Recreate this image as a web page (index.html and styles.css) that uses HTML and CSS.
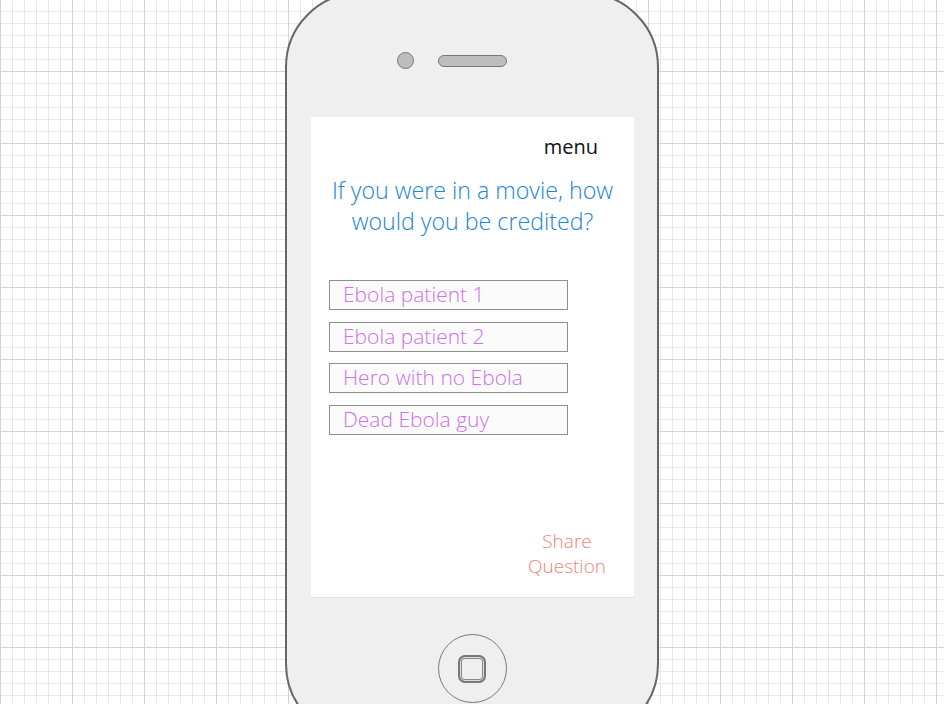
FILE: index.html
```html
<!DOCTYPE html>
<html>
<head>
<meta charset="utf-8">
<link rel="stylesheet" href="styles.css">
</head>
<body>
<div class="stage">
  <div class="phone">
    <div class="top-bar">
      <span class="camera"></span>
      <span class="speaker"></span>
    </div>
    <div class="screen">
      <div class="menu">menu</div>
      <h1 class="question">If you were in a movie, how<br>would you be credited?</h1>
      <ul class="options">
        <li class="option">Ebola patient 1</li>
        <li class="option">Ebola patient 2</li>
        <li class="option">Hero with no Ebola</li>
        <li class="option">Dead Ebola guy</li>
      </ul>
      <div class="share">Share<br>Question</div>
    </div>
    <div class="home"><span class="home-square"></span></div>
  </div>
</div>
</body>
</html>
```
FILE: styles.css
```css
html, body {
  margin: 0;
  padding: 0;
}
body {
  width: 944px;
  height: 704px;
  overflow: hidden;
  background-color: #ffffff;
  background-image:
    linear-gradient(to right, #d4d4d4 1px, transparent 1px),
    linear-gradient(to bottom, #d4d4d4 1px, transparent 1px),
    linear-gradient(to right, #e8e8e8 1px, transparent 1px),
    linear-gradient(to bottom, #e8e8e8 1px, transparent 1px);
  background-size: 72px 72px, 72px 72px, 12px 12px, 12px 12px;
  background-position: 0 -1px, 0 -1px, 0 -1px, 0 -1px;
  font-family: "Open Sans", "Noto Sans", sans-serif;
  font-weight: 350;
}
.stage {
  display: flex;
  justify-content: center;
}
.phone {
  box-sizing: border-box;
  width: 374px;
  height: 747px;
  margin-top: -8px;
  border: 2px solid #666666;
  border-radius: 75px;
  background: #efefef;
  display: flex;
  flex-direction: column;
}
.top-bar {
  display: flex;
  align-items: center;
  gap: 24px;
  margin-top: 58px;
  padding-left: 110px;
  height: 17px;
}
.camera {
  box-sizing: border-box;
  width: 17px;
  height: 17px;
  border-radius: 50%;
  background: #bdbdbd;
  border: 1px solid #777777;
}
.speaker {
  box-sizing: border-box;
  width: 69px;
  height: 12px;
  border-radius: 6px;
  background: #bdbdbd;
  border: 1px solid #777777;
}
.screen {
  box-sizing: border-box;
  margin-top: 48px;
  margin-left: 24px;
  width: 323px;
  height: 481px;
  background: #ffffff;
  border-bottom: 1px solid #e2e2e2;
  display: flex;
  flex-direction: column;
}
.menu {
  align-self: flex-end;
  margin-top: 17px;
  margin-right: 36px;
  font-size: 20px;
  font-weight: 400;
  line-height: 26px;
  color: #111111;
}
.question {
  margin: 15px 0 0;
  font-weight: 350;
  font-size: 23.2px;
  line-height: 31px;
  text-align: center;
  color: #1a85d6;
}
.options {
  list-style: none;
  margin: 43px 0 0 18px;
  padding: 0;
  display: flex;
  flex-direction: column;
  gap: 12px;
}
.option {
  box-sizing: border-box;
  width: 239px;
  height: 30px;
  border: 1px solid #8f8f8f;
  background: #fbfbfb;
  padding-left: 13px;
  font-size: 21px;
  line-height: 27px;
  color: #d070ea;
}
.option:nth-child(3) {
  margin-top: -1px;
}
.share {
  margin-top: auto;
  margin-bottom: 18px;
  align-self: flex-end;
  margin-right: 28px;
  text-align: center;
  font-size: 19px;
  line-height: 25px;
  color: #ee8570;
}
.home {
  box-sizing: border-box;
  align-self: center;
  margin-top: 36px;
  width: 69px;
  height: 69px;
  border-radius: 50%;
  border: 1px solid #7a7a7a;
  display: flex;
  align-items: center;
  justify-content: center;
}
.home-square {
  box-sizing: border-box;
  width: 28px;
  height: 28px;
  border: 2px solid #777777;
  border-radius: 7px;
  box-shadow: inset 0 0 0 1px #dcdcdc, inset 0 0 0 2px #8a8a8a;
}
```
